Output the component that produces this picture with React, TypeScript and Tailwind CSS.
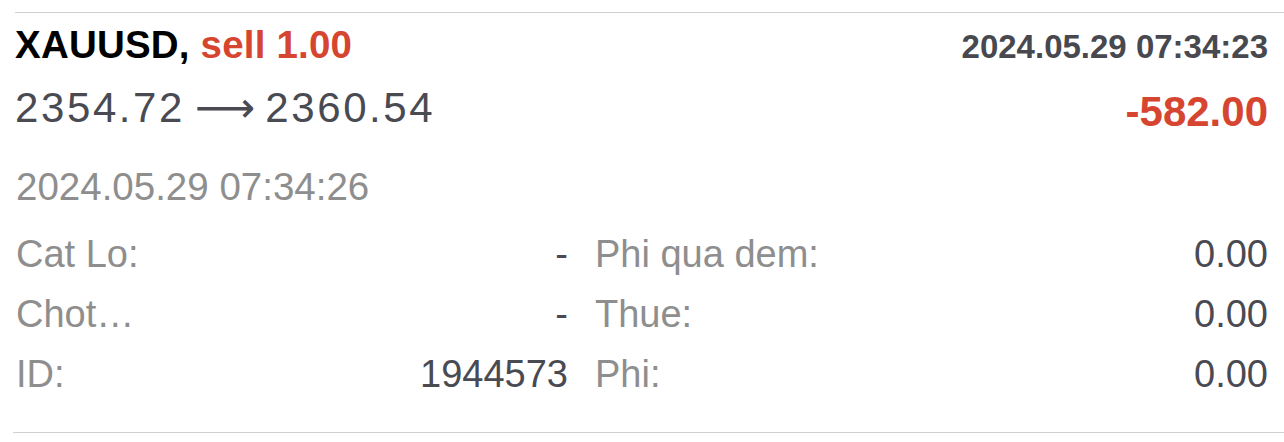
import React from 'react'

type Cell = { label: string; value: string }

const leftRows: Cell[] = [
  { label: 'Cat Lo:', value: '-' },
  { label: 'Chot…', value: '-' },
  { label: 'ID:', value: '1944573' },
]

const rightRows: Cell[] = [
  { label: 'Phi qua dem:', value: '0.00' },
  { label: 'Thue:', value: '0.00' },
  { label: 'Phi:', value: '0.00' },
]

const DetailRow = ({ label, value }: Cell) => (
  <div className="flex h-[60px] items-center justify-between leading-[60px]">
    <span className="text-[#8e8e8e]">{label}</span>
    <span className="text-[#4a4a52]">{value}</span>
  </div>
)

const App = () => {
  return (
    <div
      className="min-h-screen w-full bg-white"
      style={{ fontFamily: '"Liberation Sans", Arial, sans-serif' }}
    >
      <div className="ml-[15px] pt-[12px]">
        <div className="h-px bg-[#d0d0d0]" />
      </div>

      <div className="pl-4 pr-4">
        <div className="mt-[4px] flex h-[56px] items-baseline justify-between leading-[56px]">
          <div className="-ml-[1px] text-[38.5px] font-bold tracking-[0.2px] text-black">
            XAUUSD, <span className="text-[#d6452f]">sell 1.00</span>
          </div>
          <div className="text-[33px] font-bold text-[#48484f]">2024.05.29 07:34:23</div>
        </div>

        <div className="flex items-start justify-between">
          <div className="-ml-[1px] flex h-[69px] items-baseline gap-[10px] text-[42px] leading-[69px] tracking-[2.6px] text-[#4a4a52]">
            <span>2354.72</span>
            <span className="tracking-normal" style={{ fontFamily: '"DejaVu Sans", sans-serif' }}>
              ⟶
            </span>
            <span>2360.54</span>
          </div>
          <div className="h-[77px] text-[42px] font-bold leading-[77px] text-[#d6452f]">-582.00</div>
        </div>

        <div className="h-[74px] text-[38.5px] leading-[74px] text-[#8e8e8e]">2024.05.29 07:34:26</div>

        <div className="grid grid-cols-[552px_1fr] gap-x-[27px] text-[38px]">
          <div>
            {leftRows.map((r) => (
              <DetailRow key={r.label} {...r} />
            ))}
          </div>
          <div>
            {rightRows.map((r) => (
              <DetailRow key={r.label} {...r} />
            ))}
          </div>
        </div>
      </div>

      <div className="ml-[13px] mt-[28px]">
        <div className="h-px bg-[#d0d0d0]" />
      </div>
    </div>
  )
}

export default App
